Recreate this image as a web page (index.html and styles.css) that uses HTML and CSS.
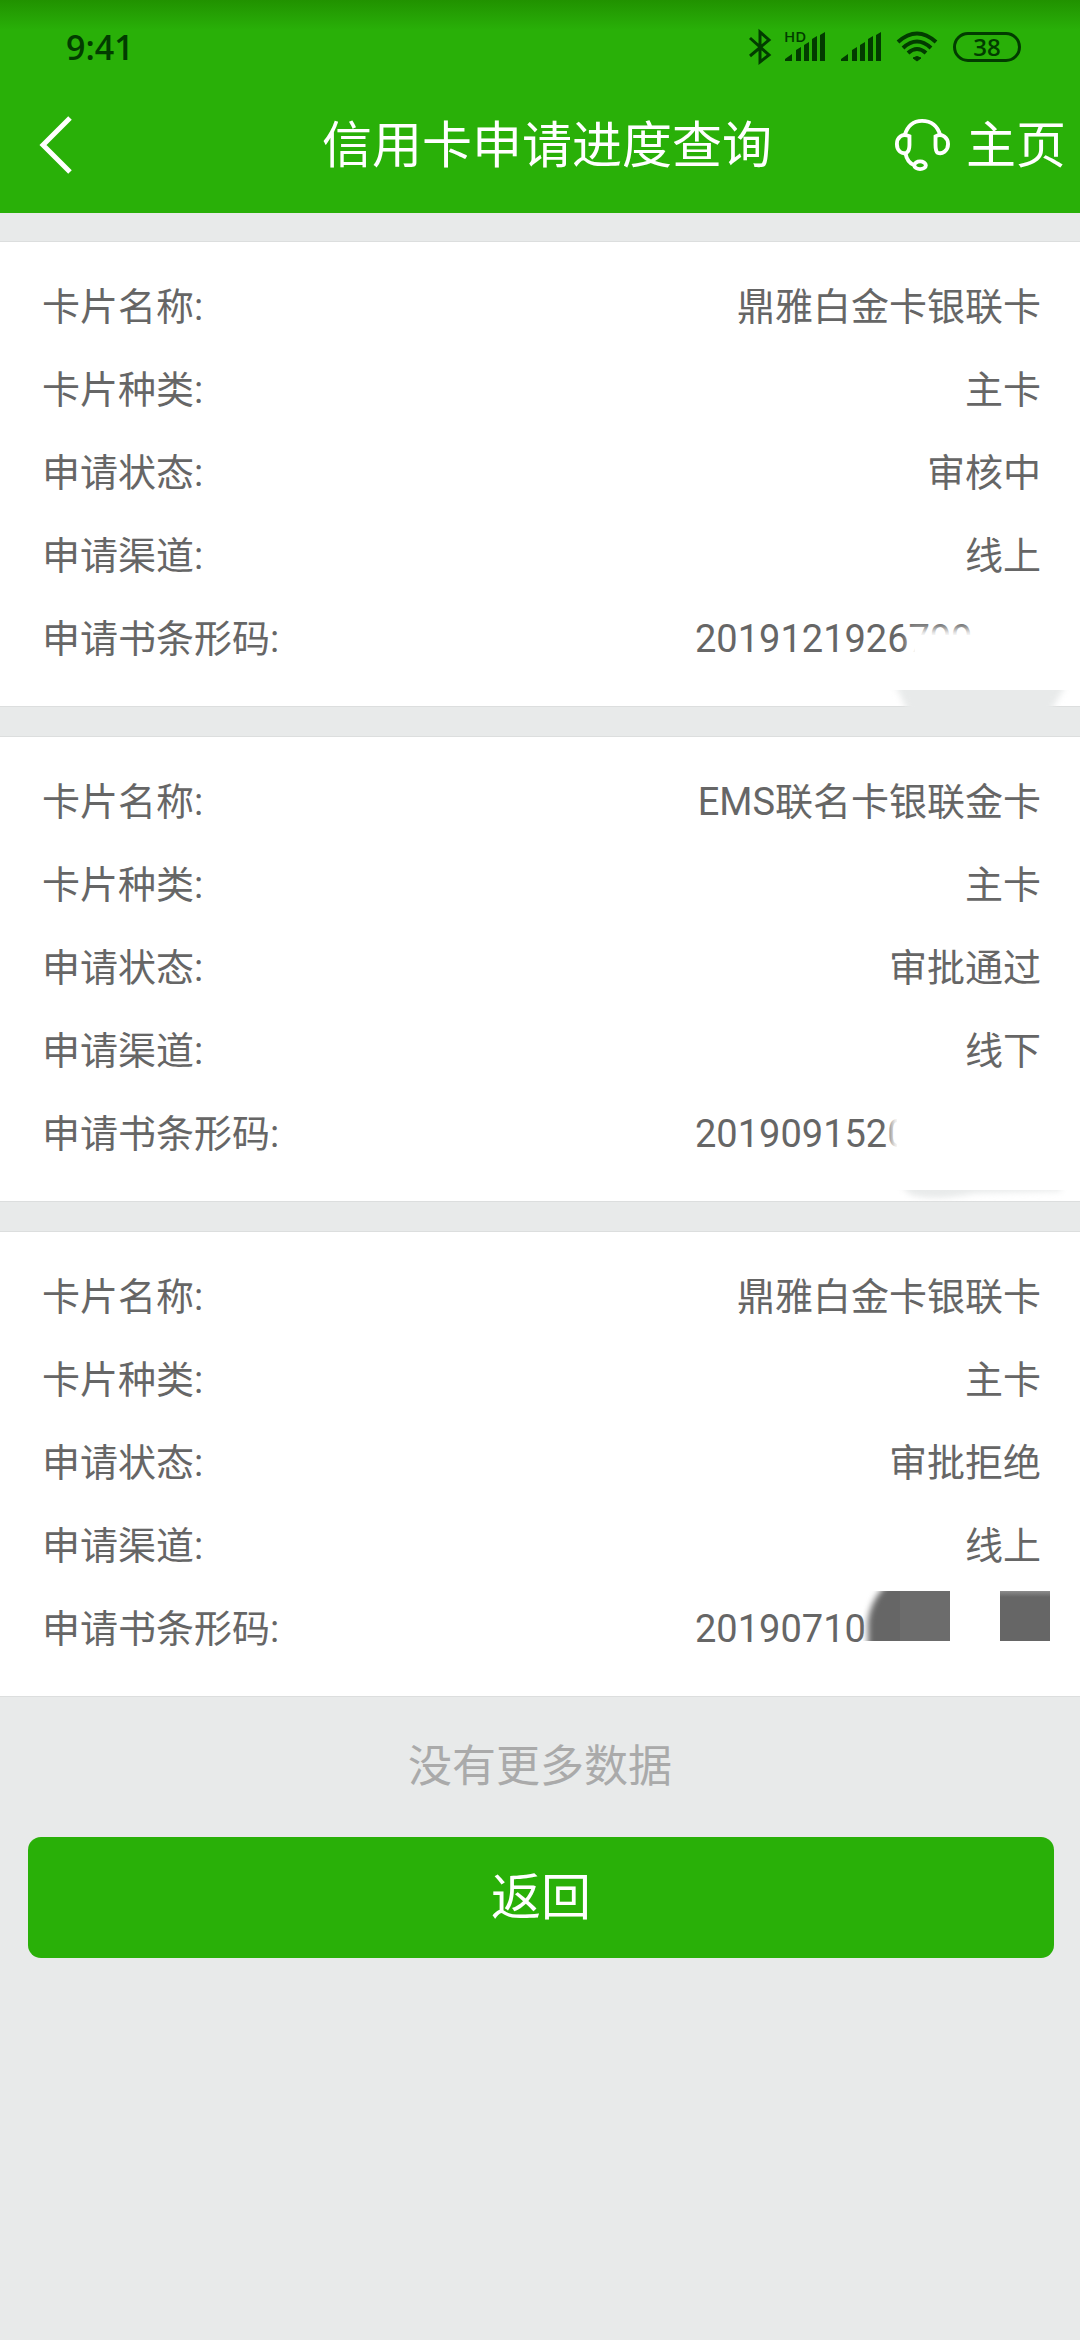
FILE: index.html
```html
<!DOCTYPE html>
<html lang="zh-CN">
<head>
    <meta charset="UTF-8">
    <meta name="viewport" content="width=device-width, initial-scale=1.0">
    <title>信用卡申请进度查询</title>
    <link rel="stylesheet" href="styles.css">
</head>
<body>
    <header class="header">
        <!-- 状态栏 -->
        <div class="status">
            <span class="status-time">9:41</span>
            <div class="status-icons">
                <svg width="22" height="34" viewBox="0 0 22 34" fill="none" stroke="currentColor" stroke-width="3">
                    <path d="M1 8L20 25L11 32V2L20 10L1 26"/>
                </svg>
                <svg width="42" height="34" viewBox="0 0 42 34" fill="currentColor">
                    <text x="-1" y="12" class="hd">HD</text>
                    <path d="M0 31V29L7 24V31ZM11 20L16 17V31H11ZM19 15L24 12V31H19ZM27 9L32 6V31H27ZM35 5L40 2V31H35Z"/>
                </svg>
                <svg width="42" height="34" viewBox="0 0 42 34" fill="currentColor">
                    <path d="M0 31V29L7 24V31ZM11 20L16 17V31H11ZM19 15L24 12V31H19ZM27 9L32 6V31H27ZM35 5L40 2V31H35Z"/>
                </svg>
                <svg width="42" height="34" viewBox="0 0 42 34" fill="none" stroke="currentColor" stroke-width="4">
                    <path d="M1 12Q20 -5 39 12M6 18Q20 5 34 18M11 23Q20 15 29 23"/>
                    <path d="M16 28Q20 25 24 28L20 31Z" fill="currentColor" stroke-width="1"/>
                </svg>
                <span class="battery">38</span>
            </div>
        </div>
        <nav class="nav">
            <button class="nav-back" type="button" aria-label="返回上一页">
                <svg width="36" height="60" viewBox="0 0 36 60" fill="none" stroke="currentColor" stroke-width="5">
                    <path d="M33 3L6 30L33 57"/>
                </svg>
            </button>
            <h1 class="nav-title">信用卡申请进度查询</h1>
            <div class="nav-right">
                <a href="#service" aria-label="客服">
                    <svg width="56" height="56" viewBox="0 0 58 58" fill="none" stroke="currentColor" stroke-width="4">
                        <path d="M11 19C14 9 20 4 29 4C38 4 45 9 48 19"/>
                        <path d="M16 20C8 16 3 22 3 28C3 35 8 39 13 37Q16 35 16 29Z"/>
                        <path d="M43 20C50 16 56 22 56 28C56 35 50 39 45 37Q43 35 43 29Z"/>
                        <path d="M12 38C13 44 16 48 21 50"/>
                        <ellipse cx="27" cy="50" rx="6" ry="4"/>
                    </svg>
                </a>
                <a class="nav-home" href="#home">主页</a>
            </div>
        </nav>
    </header>

    <main class="list">
        <dl class="card">
            <div class="row"><dt>卡片名称:</dt><dd>鼎雅白金卡银联卡</dd></div>
            <div class="row"><dt>卡片种类:</dt><dd>主卡</dd></div>
            <div class="row"><dt>申请状态:</dt><dd>审核中</dd></div>
            <div class="row"><dt>申请渠道:</dt><dd>线上</dd></div>
            <div class="row"><dt>申请书条形码:</dt><dd class="code">2019121926799<i class="cover cover-low"></i></dd></div>
            <svg class="smudge" width="190" height="17" viewBox="0 0 190 17">
                <path class="smudge-soft" d="M8 -10H184L164 24H24Z"/>
            </svg>
        </dl>
        <dl class="card">
            <div class="row"><dt>卡片名称:</dt><dd>EMS联名卡银联金卡</dd></div>
            <div class="row"><dt>卡片种类:</dt><dd>主卡</dd></div>
            <div class="row"><dt>申请状态:</dt><dd>审批通过</dd></div>
            <div class="row"><dt>申请渠道:</dt><dd>线下</dd></div>
            <div class="row"><dt>申请书条形码:</dt><dd class="code">2019091520<i class="cover cover-full"></i></dd></div>
            <svg class="smudge" width="190" height="12" viewBox="0 0 190 12">
                <path class="smudge-soft" d="M12 -8H176V1L90 3Q50 12 26 5Z"/>
            </svg>
        </dl>
        <dl class="card">
            <div class="row"><dt>卡片名称:</dt><dd>鼎雅白金卡银联卡</dd></div>
            <div class="row"><dt>卡片种类:</dt><dd>主卡</dd></div>
            <div class="row"><dt>申请状态:</dt><dd>审批拒绝</dd></div>
            <div class="row"><dt>申请渠道:</dt><dd>线上</dd></div>
            <div class="row"><dt>申请书条形码:</dt><dd class="code">20190710<svg class="blocks" width="190" height="50" viewBox="0 0 190 50">
                <defs>
                    <linearGradient id="fade" x1="0" y1="0" x2="0" y2="1">
                        <stop offset="0" stop-color="#8c8c8c"/>
                        <stop offset="0.12" stop-color="#666"/>
                    </linearGradient>
                </defs>
                <path class="block-soft" d="M5 60V30Q8 6 28 -10H50V60Z"/>
                <path fill="#6c6c6c" d="M37 0H87V50H37Z"/>
                <path fill="url(#fade)" d="M137 0H187V50H137Z"/>
            </svg></dd></div>
        </dl>
        <p class="no-more">没有更多数据</p>
        <button class="btn" type="button">返回</button>
    </main>
</body>
</html>
```
FILE: styles.css
```css
* {
    box-sizing: border-box;
    margin: 0;
    padding: 0;
}

body {
    background-color: #e8eaea;
    color: #666;
    font-family: Roboto, "Noto Sans CJK SC", sans-serif;
    font-size: 38px;
}

a {
    color: inherit;
    text-decoration: none;
}

button {
    border: none;
    color: #fff;
    font-family: inherit;
    cursor: pointer;
}

svg {
    display: block;
}

.header {
    background: linear-gradient(#219200, #29b008 30px);
    color: #fff;
}

/* 状态栏 */
.status {
    display: flex;
    align-items: center;
    justify-content: space-between;
    height: 77px;
    padding: 16px 59px 0 66px;
    color: #023c00;
}

.status-time {
    font-family: "Open Sans", sans-serif;
    font-size: 34px;
    font-weight: 600;
}

.status-icons {
    display: flex;
    align-items: center;
    gap: 14px;
}

.status-icons svg {
    overflow: visible;
}

.hd {
    font-family: "Open Sans", sans-serif;
    font-size: 15px;
    font-weight: 600;
}

.battery {
    width: 68px;
    height: 30px;
    border: 3px solid;
    border-radius: 15px;
    font-family: "Open Sans", sans-serif;
    font-size: 24px;
    font-weight: 600;
    line-height: 24px;
    text-align: center;
}

/* 导航 */
.nav {
    display: grid;
    grid-template-columns: 1fr auto 1fr;
    align-items: center;
    height: 136px;
    padding: 0 14px 0 28px;
}

.nav-back {
    justify-self: start;
    padding: 0 9px;
    background: none;
}

.nav-title,
.nav-home {
    padding-bottom: 8px;
    font-size: 50px;
    font-weight: 400;
}

.nav-right {
    display: flex;
    align-items: center;
    justify-content: flex-end;
    gap: 16px;
    white-space: nowrap;
}

/* 列表 */
.list {
    padding-top: 28px;
}

.card {
    position: relative;
    margin-bottom: 29px;
    padding: 24px 39px 25px 42px;
    border: solid #dcdede;
    border-width: 1px 0;
    background-color: #fff;
}

.row {
    display: flex;
    justify-content: space-between;
    height: 83px;
    line-height: 83px;
}

.code {
    position: relative;
    width: 346px;
}

/* 条形码遮挡 */
.cover {
    position: absolute;
    right: -20px;
    background-color: #fff;
    box-shadow: 0 0 8px 6px #fff;
}

.cover-low {
    top: 37px;
    left: 220px;
    height: 30px;
}

.cover-full {
    top: 10px;
    left: 202px;
    height: 62px;
}

.smudge {
    position: absolute;
    right: 5px;
    bottom: -1px;
}

.smudge-soft {
    fill: #e8eaea;
    filter: blur(3px);
}

.blocks {
    position: absolute;
    top: 3px;
    left: 168px;
}

.block-soft {
    fill: #666;
    filter: blur(3px);
}

.no-more {
    margin-top: -29px;
    color: #aaa;
    font-size: 44px;
    line-height: 140px;
    text-align: center;
}

.btn {
    display: block;
    width: calc(100% - 54px);
    height: 121px;
    margin: 0 26px 40px 28px;
    padding-bottom: 10px;
    border-radius: 13px;
    background-color: #29b008;
    font-size: 50px;
}
```
